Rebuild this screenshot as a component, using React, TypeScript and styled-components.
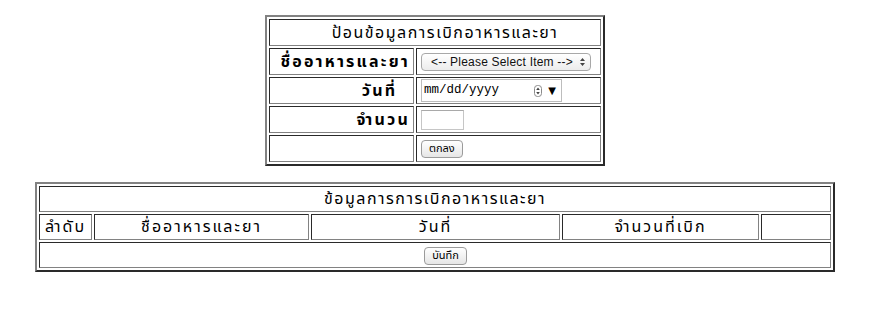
import styled, { createGlobalStyle } from "styled-components";

const GlobalStyle = createGlobalStyle`
  body {
    margin: 0;
    background: #fff;
    color: #000;
    font-family: Tahoma, "Noto Sans Thai", "Noto Sans", "DejaVu Sans", sans-serif;
  }
`;

const Page = styled.div`
  width: 870px;
  padding-top: 15px;
  display: flex;
  flex-direction: column;
  align-items: center;
  gap: 16px;
`;

const Table = styled.table<{ $width: number }>`
  width: ${(p) => p.$width}px;
  table-layout: fixed;
  border-collapse: separate;
  border-spacing: 2px;
  border: 2px solid;
  border-color: #828282 #2a2a2a #2a2a2a #828282;
`;

const Col = styled.col<{ $w: number }>`
  width: ${(p) => p.$w}px;
`;

const Row = styled.tr<{ $h: number }>`
  height: ${(p) => p.$h}px;
`;

const Cell = styled.td<{ $align?: string; $bold?: boolean; $shift?: number; $ls?: number }>`
  border: 1px solid;
  border-color: #2a2a2a #828282 #828282 #2a2a2a;
  padding: 0 3px 0 ${(p) => 3 + (p.$shift || 0)}px;
  text-align: ${(p) => p.$align || "left"};
  font-size: 16px;
  line-height: 20px;
  font-weight: ${(p) => (p.$bold ? 700 : 400)};
  letter-spacing: ${(p) => p.$ls ?? 1.5}px;
  white-space: nowrap;
  vertical-align: middle;
`;

const HeadCell = styled.th`
  border: 1px solid;
  border-color: #2a2a2a #828282 #828282 #2a2a2a;
  padding: 0 3px;
  font-size: 16px;
  line-height: 20px;
  font-weight: 400;
  letter-spacing: 2px;
  white-space: nowrap;
  text-align: center;
  vertical-align: middle;
`;

const SelectWrap = styled.div`
  position: relative;
  width: 170px;
  margin-left: 1px;
`;

const Select = styled.select`
  appearance: none;
  display: block;
  width: 100%;
  height: 18px;
  padding: 0 0 0 9px;
  border: 1px solid #a8a8a8;
  border-radius: 4px;
  background: linear-gradient(#ffffff, #ececec);
  font-family: "Liberation Sans", Arial, sans-serif;
  font-size: 12px;
  letter-spacing: 0.2px;
  color: #111;
  outline: none;
`;

const SelectArrows = styled.svg`
  position: absolute;
  right: 6px;
  top: 5px;
  pointer-events: none;
`;

const DateField = styled.div`
  width: 137px;
  height: 21px;
  margin-left: 1px;
  border: 1px solid #bdbdbd;
  display: flex;
  align-items: center;
  padding-left: 2px;
  font-family: "Liberation Mono", "Courier New", monospace;
  font-size: 12.5px;
  line-height: 19px;
  letter-spacing: 0;
`;

const DateText = styled.span`
  flex: 1;
`;

const Spinner = styled.svg`
  margin-right: 6px;
`;

const Caret = styled.span`
  font-size: 10px;
  margin-right: 5px;
  font-family: "DejaVu Sans", sans-serif;
`;

const NumberInput = styled.input`
  width: 37px;
  height: 18px;
  margin-left: 1px;
  border: 1px solid #c6c6c6;
  border-top-color: #a9a9a9;
  padding: 0 2px;
  display: block;
`;

const Button = styled.button`
  height: 18px;
  padding: 0 7px;
  margin-left: 1px;
  border: 1px solid #9b9b9b;
  border-radius: 4px;
  background: linear-gradient(#ffffff, #e6e6e6);
  font-family: Tahoma, "Noto Sans Thai", "DejaVu Sans", sans-serif;
  font-size: 11px;
  line-height: 14px;
  color: #000;
  letter-spacing: 0;
  vertical-align: middle;
`;

export default function App() {
  return (
    <>
      <GlobalStyle />
      <Page>
        <Table $width={340}>
          <colgroup>
            <Col $w={145} />
            <Col $w={185} />
          </colgroup>
          <tbody>
            <Row $h={27}>
              <Cell colSpan={2} $align="center" $shift={20}>
                ป้อนข้อมูลการเบิกอาหารและยา
              </Cell>
            </Row>
            <Row $h={27}>
              <Cell $align="right" $bold $ls={2.2}>ชื่ออาหารและยา</Cell>
              <Cell>
                <SelectWrap>
                  <Select defaultValue="">
                    <option value="">{"<-- Please Select Item -->"}</option>
                  </Select>
                  <SelectArrows width="5" height="8" viewBox="0 0 5 8">
                    <path d="M2.5 0 L5 3 L0 3 Z M2.5 8 L5 5 L0 5 Z" fill="#444" />
                  </SelectArrows>
                </SelectWrap>
              </Cell>
            </Row>
            <Row $h={27}>
              <Cell $align="right" $bold $ls={2.2}>วันที่&nbsp;&nbsp;</Cell>
              <Cell>
                <DateField>
                  <DateText>mm/dd/yyyy</DateText>
                  <Spinner width="8" height="12" viewBox="0 0 8 12">
                    <rect x="0.5" y="0.5" width="7" height="11" rx="3" fill="#fff" stroke="#8a8a8a" />
                    <path d="M4 2.5 L5.8 5 L2.2 5 Z M4 9.5 L5.8 7 L2.2 7 Z" fill="#444" />
                  </Spinner>
                  <Caret>▼</Caret>
                </DateField>
              </Cell>
            </Row>
            <Row $h={27}>
              <Cell $align="right" $bold $ls={2.2}>จำนวน</Cell>
              <Cell>
                <NumberInput type="text" />
              </Cell>
            </Row>
            <Row $h={27}>
              <Cell />
              <Cell>
                <Button type="button">ตกลง</Button>
              </Cell>
            </Row>
          </tbody>
        </Table>

        <Table $width={800}>
          <colgroup>
            <Col $w={53} />
            <Col $w={215} />
            <Col $w={249} />
            <Col $w={197} />
            <Col $w={70} />
          </colgroup>
          <tbody>
            <Row $h={26}>
              <Cell colSpan={5} $align="center">ข้อมูลการการเบิกอาหารและยา</Cell>
            </Row>
            <Row $h={26}>
              <HeadCell>ลำดับ</HeadCell>
              <HeadCell>ชื่ออาหารและยา</HeadCell>
              <HeadCell>วันที่</HeadCell>
              <HeadCell>จำนวนที่เบิก</HeadCell>
              <HeadCell />
            </Row>
            <Row $h={26}>
              <Cell colSpan={5} $align="center" $shift={20}>
                <Button type="button">บันทึก</Button>
              </Cell>
            </Row>
          </tbody>
        </Table>
      </Page>
    </>
  );
}
